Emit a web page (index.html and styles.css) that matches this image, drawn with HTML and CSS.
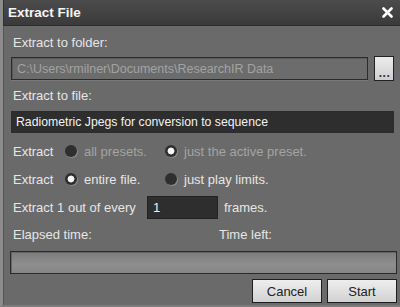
FILE: index.html
```html
<!DOCTYPE html>
<html>
<head>
<meta charset="utf-8">
<link rel="stylesheet" href="styles.css">
</head>
<body>
<div class="window">
  <div class="titlebar">
    <span class="title">Extract File</span>
    <svg class="close" width="11" height="11" viewBox="0 0 11 11"><path d="M1.5 1.5 L9.5 9.5 M9.5 1.5 L1.5 9.5" stroke="#fff" stroke-width="2.6" stroke-linecap="round"/></svg>
  </div>
  <div class="content">
    <div class="label l-folder">Extract to folder:</div>
    <div class="path-row">
      <div class="field path">C:\Users\rmilner\Documents\ResearchIR Data</div>
      <div class="browse"><span class="dots">...</span></div>
    </div>
    <div class="label l-file">Extract to file:</div>
    <div class="field file">Radiometric Jpegs for conversion to sequence</div>
    <div class="opt-row r1">
      <span class="lbl">Extract</span>
      <span class="opt disabled"><span class="radio"></span>all presets.</span>
      <span class="opt disabled"><span class="radio on"></span>just the active preset.</span>
    </div>
    <div class="opt-row r2">
      <span class="lbl">Extract</span>
      <span class="opt"><span class="radio on"></span>entire file.</span>
      <span class="opt"><span class="radio"></span>just play limits.</span>
    </div>
    <div class="every-row">
      <span class="lbl">Extract 1 out of every</span>
      <span class="num">1</span>
      <span>frames.</span>
    </div>
    <div class="time-row">
      <span class="elapsed">Elapsed time:</span>
      <span>Time left:</span>
    </div>
    <div class="progress"></div>
    <div class="buttons">
      <div class="btn">Cancel</div>
      <div class="btn">Start</div>
    </div>
  </div>
</div>
</body>
</html>
```
FILE: styles.css
```css
html, body {
  margin: 0;
  padding: 0;
  background: #6b6b6b;
}
.window {
  width: 400px;
  height: 307px;
  box-sizing: border-box;
  background: #6a6a6a;
  border-left: 3px solid #8c8c8c;
  border-bottom: 2px solid #7a7a7a;
  font-family: "Liberation Sans", Arial, sans-serif;
  font-size: 13px;
  color: #e6e6e6;
  overflow: hidden;
}
.titlebar {
  height: 26px;
  box-sizing: border-box;
  background: linear-gradient(#4c4c4c, #3a3a3a);
  border-left: 1px solid #333;
  border-bottom: 1px solid #2e2e2e;
  display: flex;
  align-items: center;
  justify-content: space-between;
  padding: 0 7px 0 4px;
}
.title {
  font-weight: bold;
  font-size: 13.5px;
  color: #f4f4f4;
}
.close {
  display: block;
}
.content {
  display: flex;
  flex-direction: column;
  padding: 0 6px 0 7px;
  border-left: 1px solid #555;
  height: 279px;
  box-sizing: border-box;
}
.label {
  height: 16px;
  line-height: 16px;
  padding-left: 2px;
}
.l-folder { margin-top: 9px; }
.l-file { margin-top: 7px; }
.path-row {
  display: flex;
  gap: 6px;
  margin-top: 6px;
  height: 24px;
  align-items: flex-start;
}
.field {
  box-sizing: border-box;
  border: 1px solid #2c2c2c;
  padding-left: 5px;
  display: flex;
  align-items: center;
}
.path {
  flex: 1;
  height: 23px;
  background: #6c6c6c;
  color: #a2a2a2;
  font-size: 12.5px;
  box-shadow: inset 1px 1px 0 #5a5a5a, 0 1px 0 #7a7a7a;
}
.browse {
  width: 20px;
  height: 25px;
  margin-top: -1px;
  box-sizing: border-box;
  border: 1px solid #222;
  background: linear-gradient(#ececec, #cfcfcf);
  display: flex;
  justify-content: center;
  align-items: flex-end;
}
.dots {
  color: #333;
  font-weight: bold;
  font-size: 12px;
  line-height: 14px;
  letter-spacing: 0.5px;
  padding-left: 1px;
}
.file {
  margin-top: 7px;
  height: 22px;
  background: #2e2e2e;
  color: #f2f2f2;
  padding-left: 4px;
  font-size: 12.25px;
}
.opt-row {
  display: grid;
  grid-template-columns: 52px 100px auto;
  align-items: center;
  height: 20px;
  padding-left: 2px;
}
.r1 { margin-top: 8px; }
.r2 { margin-top: 8px; }
.opt {
  display: flex;
  align-items: center;
  gap: 7px;
}
.opt.disabled { color: #a4a4a4; }
.radio {
  width: 12px;
  height: 12px;
  border-radius: 50%;
  box-sizing: border-box;
  background: #2f2f2f;
  box-shadow: 1px 1px 0 #8a8a8a;
  flex: none;
}
.radio.on {
  background: radial-gradient(circle, #f6f6f6 0 2.8px, #d0d0d0 3.2px, #2f2f2f 3.8px);
}
.every-row {
  margin-top: 6px;
  height: 24px;
  display: flex;
  align-items: center;
  padding-left: 2px;
}
.every-row .lbl { width: 134px; }
.num {
  width: 71px;
  height: 23px;
  box-sizing: border-box;
  background: #2e2e2e;
  border: 1px solid #222;
  color: #f0f0f0;
  padding-left: 5px;
  display: flex;
  align-items: center;
  margin-right: 6px;
}
.time-row {
  margin-top: 8px;
  height: 16px;
  line-height: 16px;
  display: flex;
  padding-left: 2px;
}
.elapsed { width: 206px; }
.progress {
  margin: 8px -3px 0 -1px;
  height: 23px;
  box-sizing: border-box;
  border: 1px solid #2a2a2a;
  background: linear-gradient(#7c7c7c, #8e8e8e 60%, #858585);
  box-shadow: inset 1px 1px 0 #666;
}
.buttons {
  margin: 5px -3px 0 0;
  display: flex;
  justify-content: flex-end;
  gap: 5px;
}
.btn {
  width: 70px;
  height: 24px;
  box-sizing: border-box;
  border: 1px solid #1e1e1e;
  background: linear-gradient(#eeeeee, #d2d2d2);
  color: #222;
  display: flex;
  align-items: center;
  justify-content: center;
}
```
